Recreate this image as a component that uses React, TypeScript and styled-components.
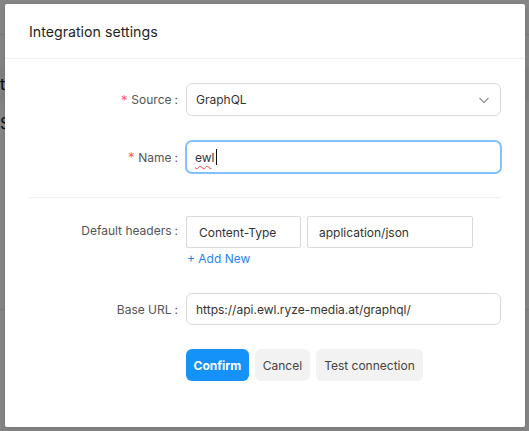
import React from "react";
import styled, { createGlobalStyle } from "styled-components";

const GlobalStyle = createGlobalStyle`
  html, body { margin: 0; padding: 0; }
  body {
    font-family: Inter, "Noto Sans", "Liberation Sans", sans-serif;
    background: #ffffff;
  }
  * { box-sizing: border-box; }
`;

const Page = styled.div`
  position: relative;
  width: 529px;
  height: 431px;
  overflow: hidden;
  background: #ffffff;
`;

const PageHeader = styled.div`
  height: 35px;
  border-bottom: 1px solid #e8e8e8;
`;

const PageBand = styled.div`
  margin-top: 32px;
  height: 34px;
  background: #f7f7f7;
  font-size: 16px;
  color: #111;
  display: flex;
  align-items: center;
`;

const PageText = styled.div`
  margin-top: 12px;
  font-size: 16px;
  color: #111;
`;

const PageLine = styled.div`
  margin-top: 176px;
  border-top: 1px solid #e8e8e8;
`;

const Mask = styled.div`
  position: absolute;
  inset: 0;
  background: rgba(0, 0, 0, 0.47);
`;

const Modal = styled.div`
  position: absolute;
  left: 5px;
  top: 4px;
  width: 520px;
  height: 423px;
  background: #ffffff;
  border-radius: 2px;
  box-shadow: 0 2px 8px rgba(0, 0, 0, 0.12);
  display: flex;
  flex-direction: column;
`;

const Header = styled.div`
  height: 55px;
  padding: 0 24px;
  display: flex;
  align-items: center;
  border-bottom: 1px solid #f0f0f0;
`;

const Title = styled.div`
  font-size: 14.2px;
  font-weight: 400;
  color: #1f1f1f;
`;

const Body = styled.div`
  padding: 24px 24px 0 24px;
  display: flex;
  flex-direction: column;
`;

const Row = styled.div<{ $mb?: number; $start?: boolean }>`
  display: grid;
  grid-template-columns: 157px 1fr;
  align-items: ${(p) => (p.$start ? "start" : "center")};
  margin-bottom: ${(p) => (p.$mb ?? 24)}px;
`;

const Label = styled.label<{ $pt?: number }>`
  display: flex;
  justify-content: flex-end;
  align-items: center;
  font-size: 12px;
  color: #555555;
  padding-top: ${(p) => p.$pt ?? 0}px;
`;

const Star = styled.span`
  color: #ff4d4f;
  margin-right: 4px;
  font-size: 12px;
  font-family: SimSun, "DejaVu Sans", sans-serif;
  line-height: 1;
`;

const Colon = styled.span`
  margin: 0 8px 0 3px;
`;

const Select = styled.div`
  height: 33px;
  border: 1px solid #d9d9d9;
  border-radius: 6px;
  padding: 0 10px 0 9px;
  display: flex;
  align-items: center;
  justify-content: space-between;
  font-size: 12px;
  color: #333333;
`;

const FocusedInput = styled.div`
  height: 34px;
  border: 2px solid #80c2ff;
  border-radius: 7px;
  padding: 0 8px;
  display: flex;
  align-items: center;
  font-size: 12px;
  color: #333333;
  margin-left: -1px;
  margin-right: -1px;
`;

const Misspelled = styled.span`
  text-decoration: underline wavy #ff3b3b;
  text-decoration-thickness: 1px;
  text-underline-offset: 3px;
`;

const Caret = styled.span`
  display: inline-block;
  width: 1px;
  height: 16px;
  background: #111;
  margin-left: 1px;
`;

const Input = styled.input<{ $w?: number; $radius?: number; $pl?: number }>`
  height: 32px;
  width: ${(p) => (p.$w ? `${p.$w}px` : "100%")};
  border: 1px solid #d9d9d9;
  border-radius: ${(p) => p.$radius ?? 6}px;
  padding: 0 0 0 ${(p) => p.$pl ?? 9}px;
  font-family: inherit;
  font-size: 12px;
  color: #333333;
  background: #fff;
  outline: none;
`;

const Divider = styled.div`
  height: 1px;
  background: #f0f0f0;
  margin: 0 0 18px 0;
`;

const HeaderPair = styled.div`
  display: flex;
  gap: 6px;
`;

const AddLink = styled.a`
  display: block;
  font-size: 12px;
  color: #2a86e8;
  line-height: 20px;
  margin-top: 1px;
  padding-left: 1px;
  text-decoration: none;
  cursor: pointer;
`;

const Buttons = styled.div`
  display: flex;
  gap: 6px;
`;

const Button = styled.button<{ $primary?: boolean }>`
  height: 32px;
  padding: 0 ${(p) => (p.$primary ? 7.5 : 8)}px;
  border: none;
  border-radius: 6px;
  font-family: inherit;
  font-size: 12px;
  font-weight: ${(p) => (p.$primary ? 700 : 400)};
  color: ${(p) => (p.$primary ? "#ffffff" : "#444444")};
  background: ${(p) => (p.$primary ? "#1492fa" : "#f2f2f2")};
  cursor: pointer;
`;

const Chevron = () => (
  <svg width="12" height="12" viewBox="0 0 12 12" fill="none">
    <path d="M1.5 4l4.5 4.5L10.5 4" stroke="#8c8c8c" strokeWidth="1.1" />
  </svg>
);

export default function App() {
  return (
    <Page>
      <GlobalStyle />
      <PageHeader />
      <PageBand>trello</PageBand>
      <PageText>Settings</PageText>
      <PageLine />
      <Mask />
      <Modal>
        <Header>
          <Title>Integration settings</Title>
        </Header>
        <Body>
          <Row>
            <Label>
              <Star>*</Star>Source<Colon>:</Colon>
            </Label>
            <Select>
              <span>GraphQL</span>
              <Chevron />
            </Select>
          </Row>
          <Row $mb={23}>
            <Label>
              <Star>*</Star>Name<Colon>:</Colon>
            </Label>
            <FocusedInput>
              <Misspelled>ew</Misspelled>
              <span>l</span>
              <Caret />
            </FocusedInput>
          </Row>
          <Divider />
          <Row $start>
            <Label $pt={7}>
              Default headers<Colon>:</Colon>
            </Label>
            <div>
              <HeaderPair>
                <Input $w={115} $radius={2} $pl={12} defaultValue="Content-Type" />
                <Input $w={166} $radius={2} $pl={11} defaultValue="application/json" />
              </HeaderPair>
              <AddLink>+ Add New</AddLink>
            </div>
          </Row>
          <Row>
            <Label>
              Base URL<Colon>:</Colon>
            </Label>
            <Input defaultValue="https://api.ewl.ryze-media.at/graphql/" />
          </Row>
          <Row>
            <div />
            <Buttons>
              <Button $primary>Confirm</Button>
              <Button>Cancel</Button>
              <Button>Test connection</Button>
            </Buttons>
          </Row>
        </Body>
      </Modal>
    </Page>
  );
}
